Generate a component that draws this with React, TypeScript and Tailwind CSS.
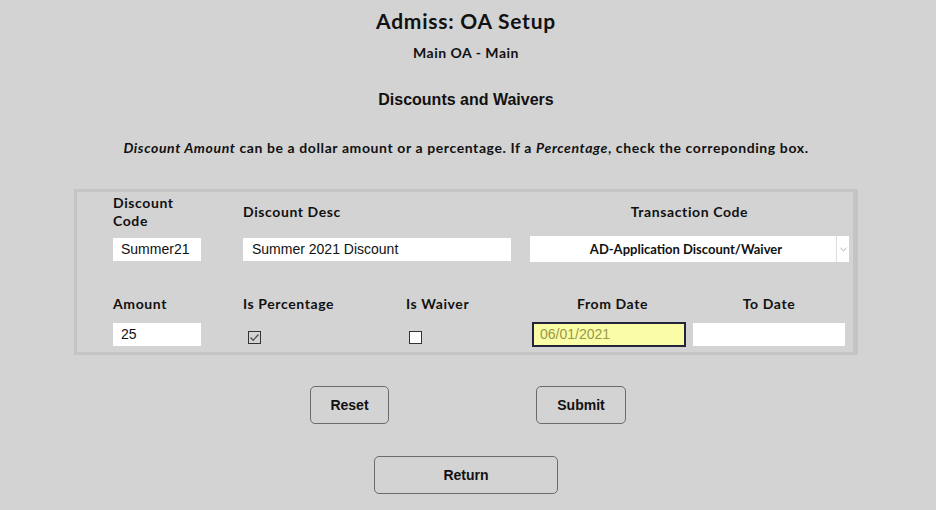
import React from "react";

const geo = "font-['Lato','Noto_Sans',sans-serif]";
const arial = "font-['Liberation_Sans',Arial,sans-serif]";

function Check({ checked }: { checked?: boolean }) {
  return (
    <span
      className={
        "inline-flex h-[13px] w-[13px] items-center justify-center border border-[#333] " +
        (checked ? "bg-[#d3d3d3]" : "bg-white")
      }
    >
      {checked && (
        <svg width="11" height="11" viewBox="0 0 11 11">
          <path d="M1.5 5.5 L4.2 8.2 L9.5 2.5" fill="none" stroke="#555" strokeWidth="1.4" />
        </svg>
      )}
    </span>
  );
}

function Button({ label, w }: { label: string; w: string }) {
  return (
    <button
      className={`${w} h-[38px] rounded-[5px] border border-[#6b6b6b] bg-[#d3d3d3] text-[14px] font-bold text-[#111] ${arial}`}
    >
      {label}
    </button>
  );
}

export default function App() {
  return (
    <div className={`min-h-[510px] w-[936px] bg-[#d3d3d3] text-[#111] ${geo}`}>
      <div className="pt-[8px] pr-[4px] text-center">
        <h1 className="h-[26px] text-[21px] font-bold leading-[26px] tracking-[0.75px]">Admiss: OA Setup</h1>
        <div className="mt-[10px] h-[18px] text-[14px] font-bold leading-[18px] tracking-[0.5px]">
          Main OA - Main
        </div>
        <h2 className={`mt-[28px] h-[20px] text-[16px] font-bold leading-[20px] ${arial}`}>
          Discounts and Waivers
        </h2>
        <p className="mt-[29px] h-[18px] text-[14px] font-bold leading-[18px] tracking-[0.6px]">
          <i>Discount Amount</i> can be a dollar amount or a percentage. If a <i>Percentage</i>, check the
          correponding box.
        </p>
      </div>

      <div className="ml-[74px] mt-[32px] h-[166px] w-[784px] border-[3px] border-r-[5px] border-[#c4c4c4] pl-[36px] pt-[2px]">
        {/* row 1 */}
        <div className="flex h-[36px] items-center text-[14px] font-bold leading-[18px] tracking-[0.6px]">
          <div className="w-[130px]">
            Discount
            <br />
            Code
          </div>
          <div className="w-[287px]">Discount Desc</div>
          <div className="w-[319px] text-center">Transaction Code</div>
        </div>
        <div className={`mt-[6px] flex h-[26px] items-center text-[14px] ${arial}`}>
          <div className="w-[130px]">
            <div className="flex h-[23px] w-[88px] items-center bg-white pl-[8px]">Summer21</div>
          </div>
          <div className="w-[287px]">
            <div className="flex h-[23px] w-[268px] items-center bg-white pl-[9px]">Summer 2021 Discount</div>
          </div>
          <div className="flex h-[26px] w-[319px] bg-white">
            <div className={`flex flex-1 items-center justify-center pl-[6px] pt-[2px] text-[13px] font-bold ${geo}`}>
              AD-Application Discount/Waiver
            </div>
            <div className="flex w-[13px] items-center justify-center border-l border-[#ddd]">
              <svg width="7" height="5" viewBox="0 0 7 5">
                <path d="M0.5 1 L3.5 3.8 L6.5 1" fill="none" stroke="#aaa" strokeWidth="1" />
              </svg>
            </div>
          </div>
        </div>

        {/* row 2 */}
        <div className="mt-[33px] flex h-[18px] items-center text-[14px] font-bold leading-[18px] tracking-[0.6px]">
          <div className="w-[130px]">Amount</div>
          <div className="w-[163px]">Is Percentage</div>
          <div className="w-[126px]">Is Waiver</div>
          <div className="w-[161px] text-center">From Date</div>
          <div className="w-[152px] text-center">To Date</div>
        </div>
        <div className={`mt-[9px] flex h-[25px] items-center text-[14px] ${arial}`}>
          <div className="w-[130px]">
            <div className="flex h-[23px] w-[88px] items-center bg-white pl-[8px]">25</div>
          </div>
          <div className="flex w-[163px] pl-[5px] pt-[5px]">
            <Check checked />
          </div>
          <div className="flex w-[126px] pl-[3px] pt-[5px]">
            <Check />
          </div>
          <div className="w-[161px]">
            <div className="flex h-[25px] w-[154px] items-center border-[2px] border-[#23263a] bg-[#fafca6] pl-[6px] text-[#98984a]">
              06/01/2021
            </div>
          </div>
          <div className="h-[23px] w-[152px] bg-white" />
        </div>
      </div>

      <div className="mt-[31px] flex">
        <div className="ml-[310px]">
          <Button label="Reset" w="w-[79px]" />
        </div>
        <div className="ml-[147px]">
          <Button label="Submit" w="w-[90px]" />
        </div>
      </div>
      <div className="mt-[32px] ml-[374px]">
        <Button label="Return" w="w-[184px]" />
      </div>
    </div>
  );
}
